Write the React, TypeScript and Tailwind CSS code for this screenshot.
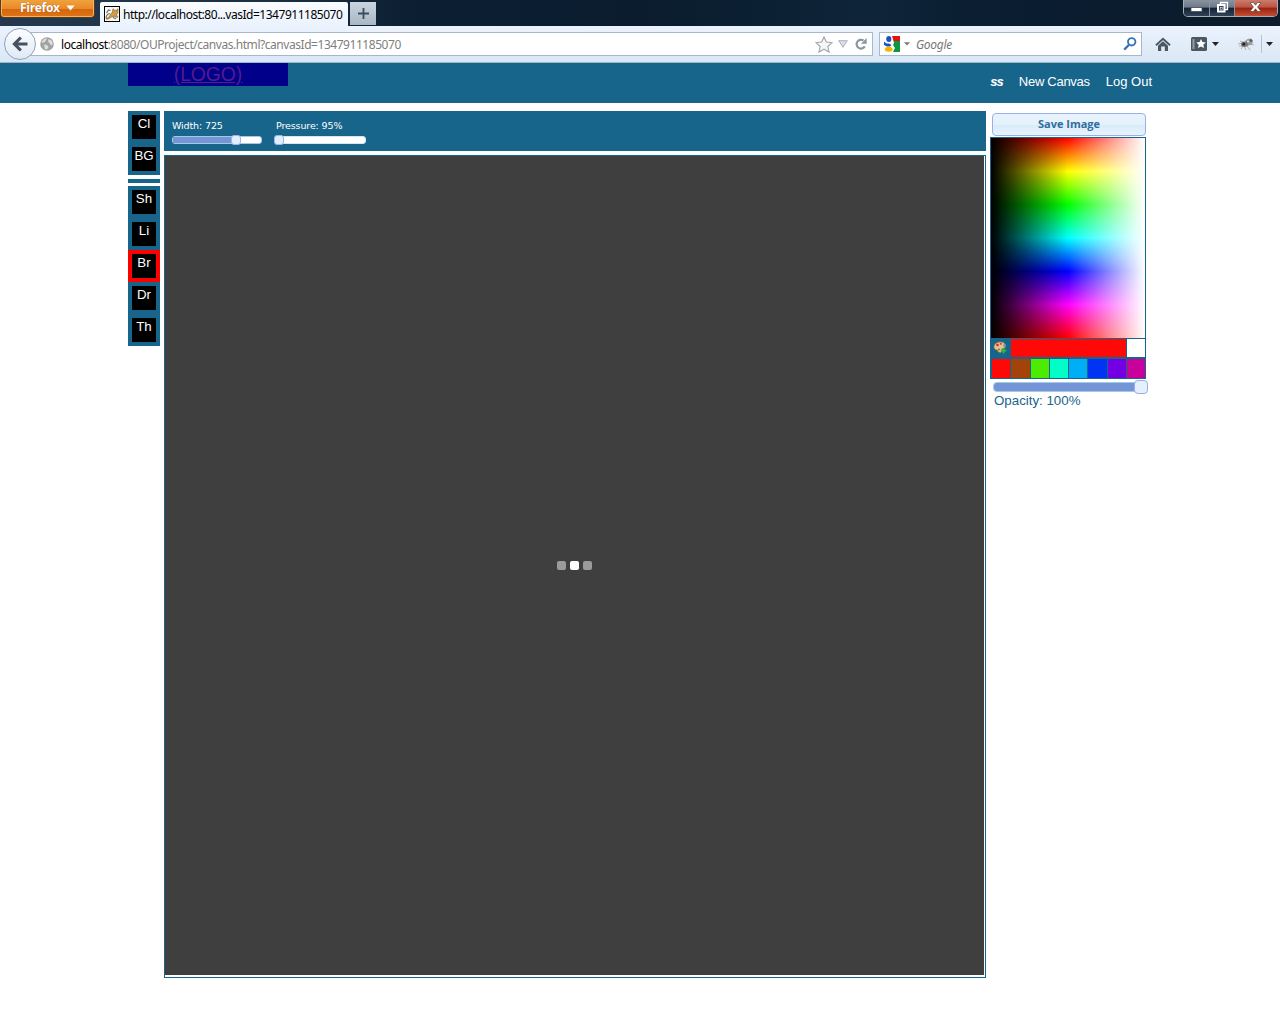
import React from "react";

const swatches = [
  "bg-[#ff0808]",
  "bg-[#a3430a]",
  "bg-[#4deb00]",
  "bg-[#00ffc8]",
  "bg-[#00aef5]",
  "bg-[#0034f5]",
  "bg-[#7200e2]",
  "bg-[#c9009c]",
];

function Tool({ label, active = false }: { label: string; active?: boolean }) {
  return (
    <div className={`h-8 w-8 border-4 ${active ? "border-[#ff0000]" : "border-[#17658b]"}`}>
      <div className="h-6 bg-black text-center text-[13.3px] leading-[17px] text-white">
        <span className="-mx-2">{label}</span>
      </div>
    </div>
  );
}

function TitleBar() {
  return (
    <div className="flex h-[26px] items-start bg-[linear-gradient(90deg,#24394d_0,#1d3145_20%,#0c1f33_32%,#0a1c2e_50%,#0e2438_68%,#0a1c30_80%,#0c1c2c_100%)]">
      <div className="flex h-[18px] w-[95px] items-center rounded-b-[4px] border border-t-0 border-[#5c3a1c] bg-[linear-gradient(180deg,#f0a23c,#e88a2a_50%,#d8660c_55%,#de7518)] pb-px pl-[19px] shadow-[inset_0_-1px_0_#f5b265,inset_1px_0_0_#f5b265,inset_-1px_0_0_#f5b265]">
        <span className="font-['Open_Sans',sans-serif] text-[12px] leading-4 font-bold tracking-[-0.3px] text-white [text-shadow:0_0_1px_#8a4510]">Firefox</span>
        <svg className="-mt-px ml-[6px]" width="9" height="6" viewBox="0 0 9 6">
          <path d="M0.5 0.5h8L4.5 5.5z" fill="#fff" />
        </svg>
      </div>
      <div className="mt-[2px] ml-[5px] flex h-6 w-[248px] items-center rounded-t-[2px] bg-[linear-gradient(180deg,#fafcff,#e9f2fd)] pl-[4px]">
        <svg width="16" height="16" viewBox="0 0 16 16">
          <rect x=".5" y=".5" width="15" height="15" fill="#f7f7f5" stroke="#000" />
          <path d="M6.500 8.500L8.500 6 9 2.800l1.600 1.500h1.700L14 2.800l-.2 4L12.300 9l1.700 1.800-1 .7-2.300-1.200-3.200.7-3.500 2.200-2-.3 3.200-2z" fill="#d09a48" stroke="#8a6528" strokeWidth=".7" />
          <path d="M2 12.300c.2-3 1.800-4.800 4-4.500M2.500 7l2-3 2 .5M9 11.500l3 1.200" stroke="#666" strokeWidth="1.100" fill="none" />
        </svg>
        <span className="ml-[3px] pt-[2px] font-['Noto_Sans',sans-serif] text-[12px] whitespace-nowrap tracking-[-0.48px] text-black">http://localhost:80...vasId=1347911185070</span>
      </div>
      <div className="mt-[2px] ml-[2px] flex h-[23px] w-[26px] items-center justify-center bg-[linear-gradient(180deg,#c9d4de,#a9b7c4)]">
        <svg width="11" height="11" viewBox="0 0 11 11">
          <path d="M5.5 0v11M0 5.5h11" stroke="#3f4c5a" strokeWidth="1.8" />
        </svg>
      </div>
      <div className="mr-[2px] ml-auto flex h-[17px] w-[95px] overflow-hidden rounded-b-[5px] border border-t-0 border-[#a5adb5]">
        <div className="flex w-[26px] items-center justify-center border-r border-[#8a939d] bg-[linear-gradient(180deg,#8894a2_0,#6d7a89_45%,#132235_50%,#31435a_100%)]">
          <svg width="13" height="14" viewBox="0 0 13 14"><rect x="1" y="6.500" width="11" height="4" fill="#fff" stroke="#454b55" strokeWidth=".8" /></svg>
        </div>
        <div className="flex w-[25px] items-center justify-center border-r border-[#8a939d] bg-[linear-gradient(180deg,#8894a2_0,#6d7a89_45%,#132235_50%,#31435a_100%)]">
          <svg width="13" height="14" viewBox="0 0 13 14">
            <path d="M4.5 1.500h7v7h-7z" fill="none" stroke="#fff" strokeWidth="1.300" />
            <path d="M2 4h6.500v6.500H2z" fill="#39465a" stroke="#fff" strokeWidth="2" />
            <rect x="4.250" y="6.250" width="2" height="2" fill="#39465a" stroke="#fff" strokeWidth=".5" />
          </svg>
        </div>
        <div className="flex flex-1 items-center justify-center bg-[linear-gradient(180deg,#cb7c6d_0,#bd5541_45%,#962210_50%,#c54e32_100%)] pr-px">
          <svg width="13" height="14" viewBox="0 0 13 14">
            <path d="M1 1.500h3.400l2.100 2.700 2.100-2.700H12L8.600 6l3.400 4.500H8.600L6.500 7.800l-2.100 2.700H1L4.400 6z" fill="#fff" stroke="#5a423f" strokeWidth=".7" />
          </svg>
        </div>
      </div>
    </div>
  );
}

function NavBar() {
  return (
    <div className="flex h-[37px] items-center border-b border-[#a3b6c9] bg-[linear-gradient(180deg,#ebf3fd,#dae7f6)] font-['Noto_Sans',sans-serif] text-[12px]">
      <div className="z-10 ml-[4px] flex h-8 w-8 items-center justify-center rounded-full border border-[#8ea2b6] bg-[linear-gradient(180deg,#fcfdff,#dfe9f5)]">
        <svg width="16" height="16" viewBox="0 0 16 16">
          <path d="M8.8 1.5L2.5 8l6.3 6.5M3 8h12.5" fill="none" stroke="#46515f" strokeWidth="3.2" />
        </svg>
      </div>
      <div className="-ml-[6px] flex h-6 w-[843px] items-center border border-[#a6b8ca] bg-white pl-[9px]">
        <svg width="14" height="14" viewBox="0 0 14 14">
          <circle cx="7" cy="7" r="6.8" fill="#a2a2a2" />
          <path d="M1.500 5L4 2l3-.8L6 3.500 4.500 5 3 6zM8.500 2l3 1.500L13 7l-2 1.500L9.500 6 8 4.500zM4 7.500l3 .5 1.500 2L7 12.500 5 12z" fill="#dedede" />
        </svg>
        <span className="ml-[7px] pt-[2px] whitespace-nowrap tracking-[-0.455px] text-[#808080]">
          <span className="text-black">localhost</span>:8080/OUProject/canvas.html?canvasId=1347911185070
        </span>
        <svg className="ml-auto" width="18" height="17" viewBox="0 0 18 17">
          <path d="M9 1l2.400 5 5.600.7-4.100 3.800 1.100 5.600L9 13.300l-5 2.800 1.100-5.600L1 6.700 6.600 6z" fill="#f6f7f8" stroke="#a5a9ae" strokeWidth="1.200" />
        </svg>
        <svg className="ml-[5px]" width="10" height="8" viewBox="0 0 10 8"><path d="M.7.7h8.600L5 7.300z" fill="#d9dee4" stroke="#a8b0b9" /></svg>
        <svg className="mr-[5px] ml-[7px]" width="12" height="12" viewBox="0 0 12 12">
          <path d="M9.800 8.400A4.400 4.400 0 1 1 8.500 2.500" fill="none" stroke="#8b949f" strokeWidth="2.200" />
          <path d="M11.700 0v5.700H6z" fill="#8b949f" />
        </svg>
      </div>
      <div className="ml-[6px] flex h-6 w-[263px] items-center border border-[#a6b8ca] bg-white pl-[4px]">
        <svg width="16" height="16" viewBox="0 0 16 16">
          <rect width="16" height="16" fill="#fff" />
          <path d="M8 0h8v5H9.500z" fill="#e80f10" />
          <path d="M9.500 5H16v11H9l2-4-2-3 1-2z" fill="#0f9641" />
          <ellipse cx="4.800" cy="3" rx="2.600" ry="3" fill="#1c52bf" />
          <path d="M0 5.500l2.500 2H5L7.500 9 6 10.500H3L0 9z" fill="#1c52bf" />
          <ellipse cx="4.700" cy="13.300" rx="3.800" ry="2.500" fill="#f5b400" />
        </svg>
        <svg className="ml-[4px]" width="6" height="4" viewBox="0 0 6 4"><path d="M0 .3h6L3 3.500z" fill="#777" /></svg>
        <span className="ml-[6px] pt-[2px] tracking-[-0.3px] text-[#777] italic">Google</span>
        <svg className="mr-[4px] ml-auto" width="14" height="14" viewBox="0 0 14 14">
          <circle cx="8.700" cy="4.800" r="3.700" fill="none" stroke="#3974b4" strokeWidth="1.900" />
          <path d="M6 7.700L1.200 12.600" stroke="#3974b4" strokeWidth="2.300" />
        </svg>
      </div>
      <svg className="ml-[13px]" width="16" height="15" viewBox="0 0 16 15">
        <path d="M1 8.200L8 1.700l7 6.500" fill="none" stroke="#4c5764" strokeWidth="1.900" />
        <path d="M3 8.800L8 4.200l5 4.600V14H9.800V9.500H6.200V14H3z" fill="#4c5764" />
      </svg>
      <svg className="ml-[20px]" width="16" height="14" viewBox="0 0 16 14">
        <rect width="16" height="14" rx="1.500" fill="#4c5764" />
        <path d="M2.500 2v10" stroke="#929daa" strokeWidth="2" />
        <path d="M10 2l1.400 3 3.400.4-2.500 2.300.7 3.400L10 9.400l-3 1.700.7-3.400-2.500-2.300L8.600 5z" fill="#fff" />
      </svg>
      <svg className="ml-[5px]" width="7" height="4" viewBox="0 0 7 4"><path d="M0 0h7L3.500 4z" fill="#222" /></svg>
      <svg className="ml-[19px]" width="17" height="14" viewBox="0 0 17 14">
        <path d="M0 7l5-1M1 9h5M3 12l3-4M2 4l5 2M9 9l3 4M6 9l2 4M12 7l4 1" stroke="#a5a8ac" strokeWidth=".9" />
        <ellipse cx="11" cy="5" rx="4" ry="3.200" transform="rotate(-25 11 5)" fill="#9a9a9a" />
        <ellipse cx="6.500" cy="7.300" rx="3.500" ry="2.700" fill="#777" />
        <circle cx="5.800" cy="7" r="1.500" fill="#222" />
        <circle cx="13" cy="3.500" r="1.200" fill="#555" />
        <circle cx="10" cy="4.500" r="1" fill="#e8e8e8" />
      </svg>
      <div className="ml-[6px] h-[18px] w-px bg-[#b6c2cf]" />
      <svg className="ml-[4px]" width="7" height="4" viewBox="0 0 7 4"><path d="M0 0h7L3.500 4z" fill="#222" /></svg>
    </div>
  );
}

function Palette() {
  return (
    <svg width="14" height="13" viewBox="0 0 14 13">
      <path d="M1 5.500C1.500 2.500 4.500 1 7.500 1c3 0 5 1.500 5 4 0 2.500-2.500 2-3.500 3s.5 3-1.500 3.500c-2 0-3-1-3-2.500C2.500 9 .8 8 1 5.500z" fill="#e8c08c" stroke="#a5743d" strokeWidth=".7" />
      <circle cx="4.500" cy="4" r="1.300" fill="#c8322b" />
      <circle cx="7.800" cy="2.800" r="1.100" fill="#d9452e" />
      <circle cx="11.500" cy="4.500" r="1.300" fill="#5692d8" />
      <circle cx="6" cy="8.500" r=".9" fill="#8a5a30" />
      <path d="M10.500 7v5.500M7.700 9.700h5.600" stroke="#2fbf35" strokeWidth="1.700" />
    </svg>
  );
}

export default function App() {
  return (
    <div className="h-[1024px] w-[1280px] overflow-hidden bg-white font-['Liberation_Sans',Arial,sans-serif]">
      <TitleBar />
      <NavBar />
      <header className="flex h-10 bg-[#17658b] px-32">
        <div className="h-[23px] w-40 bg-[#00008b] text-center text-[19.3px] leading-[23px] text-[#551a8b] underline">(LOGO)</div>
        <nav className="ml-auto flex items-center gap-4 pb-[3px] text-[13px] text-white">
          <span className="font-bold italic tracking-[-1px]">ss</span>
          <span className="tracking-[-0.28px]">New Canvas</span>
          <span>Log Out</span>
        </nav>
      </header>
      <main className="flex items-start gap-1 px-32 pt-2">
        <div className="w-8">
          <Tool label="Cl" />
          <Tool label="BG" />
          <div className="mt-1 mb-[3px] h-1 bg-[#17658b]" />
          <Tool label="Sh" />
          <Tool label="Li" />
          <Tool label="Br" active />
          <Tool label="Dr" />
          <Tool label="Th" />
        </div>
        <div className="w-[822px]">
          <div className="flex h-10 bg-[#17658b] pt-[9px] pl-2 font-['DejaVu_Sans',Verdana,sans-serif] text-[9.5px] tracking-[-0.12px] text-white">
            <div className="w-[90px]">
              <div className="h-4 leading-[12px] whitespace-nowrap">Width: 725</div>
              <div className="relative h-2 rounded-[3px] border border-[#a6c9e2] bg-white">
                <div className="h-full w-16 bg-[#7595d9]" />
                <div className="absolute -top-[2px] left-[58px] h-[10px] w-[10px] rounded-[3px] border border-[#9db6e8] bg-[#e2eefb]" />
              </div>
            </div>
            <div className="ml-[13px] w-[91px]">
              <div className="h-4 pl-px leading-[12px] whitespace-nowrap">Pressure: 95%</div>
              <div className="relative h-2 rounded-[3px] border border-[#d4e5f1] bg-white">
                <div className="absolute -top-[2px] -left-[2px] h-[10px] w-[10px] rounded-[3px] border border-[#9db6e8] bg-[#e2eefb]" />
              </div>
            </div>
          </div>
          <div className="mt-1 h-[823px] border border-[#17658b]">
            <div className="flex h-[819px] w-[819px] items-center justify-center gap-1 bg-[#3f3f3f]">
              <div className="h-[9px] w-[9px] rounded-[2px] bg-[#9b9b9b]" />
              <div className="h-[9px] w-[9px] rounded-[2px] bg-white" />
              <div className="h-[9px] w-[9px] rounded-[2px] bg-[#9b9b9b]" />
            </div>
          </div>
        </div>
        <div className="w-[158px] pt-[2px]">
          <div className="ml-[2px] flex h-[23px] w-[154px] items-center justify-center rounded-[4px] border border-[#9aafe5] bg-[linear-gradient(180deg,#e9f3fd_0,#e4f1fb_50%,#d7ebf9_52%,#e8f3fc_100%)] text-[11px] font-bold text-[#2e6e9e]">
            <span className="font-['Open_Sans',sans-serif] whitespace-nowrap">Save Image</span>
          </div>
          <div className="mt-px h-[242px] w-[156px] border border-[#17658b] bg-[#17658b]">
            <div className="h-[200px] bg-[linear-gradient(90deg,#000_0%,#0000_50%,#fff0_50%,#fff_100%),linear-gradient(180deg,#f00,#ff0,#0f0,#0ff,#00f,#f0f,#f00)]" />
            <div className="mt-px flex h-[18px]">
              <div className="flex w-5 items-start justify-center pt-[2px] pr-[2px]"><Palette /></div>
              <div className="w-[115px] bg-[#ff0808]" />
              <div className="ml-px flex-1 bg-white" />
            </div>
            <div className="mt-[2px] flex h-[19px] gap-px pl-px">
              {swatches.map((s) => <div key={s} className={`flex-1 ${s}`} />)}
            </div>
          </div>
          <div className="relative mt-[3px] ml-[3px] h-[10px] w-[153px] rounded-[4px] border border-[#a6c9e2] bg-[#7595d9]">
            <div className="absolute -top-[3px] left-[140px] h-[14px] w-[14px] rounded-[4px] border border-[#9aafe5] bg-[#e4f0fc]" />
          </div>
          <div className="mt-px ml-1 text-[13.3px] leading-4 whitespace-nowrap text-[#17658b]">Opacity: 100%</div>
        </div>
      </main>
    </div>
  );
}
